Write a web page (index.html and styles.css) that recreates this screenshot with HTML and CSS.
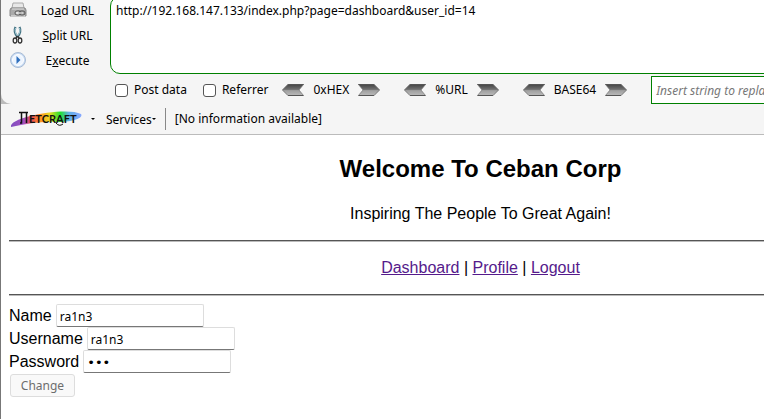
FILE: index.html
```html
<!DOCTYPE html>
<html lang="en">
<head>
<meta charset="utf-8">
<title>Ceban Corp</title>
<link rel="stylesheet" href="styles.css">
</head>
<body>
<svg class="defs" width="0" height="0" aria-hidden="true">
  <defs>
    <linearGradient id="steel" x1="0" y1="0" x2="0" y2="1">
      <stop offset="0" stop-color="#404040"/><stop offset=".45" stop-color="#707070"/><stop offset=".55" stop-color="#a0a0a0"/><stop offset="1" stop-color="#bcbcbc"/>
    </linearGradient>
    <symbol id="arrow" viewBox="0 0 22 12">
      <path d="M0 6 6 0H22L17 6l5 6H6Z" fill="url(#steel)"/>
      <path d="M6 11.5H21.5M6 .5H21.5" stroke="#555" fill="none"/>
      <path d="M.5 6 6 .5M.5 6 6 11.5M21.5.5 17 6l4.500 5.500" stroke="#777" stroke-width=".7" fill="none"/>
    </symbol>
  </defs>
</svg>
<div class="window">
  <section class="hackbar">
    <div class="actions">
      <button type="button" class="action">
        <svg width="18" height="18" viewBox="0 0 18 18"><path d="M4 2h10l1 5H3Z" fill="#e8e8e8" stroke="#aaa"/><path d="M2 7h14l1 2v6H1V9Z" fill="#aaa" stroke="#888"/><path d="M3 8h12" stroke="#ddd"/><path d="M2 14h14v2H2Z" fill="#c8c8c8"/><rect x="6" y="10" width="6" height="4" rx="2" fill="#ddd" stroke="#555"/><rect x="10" y="10" width="6" height="4" rx="2" fill="none" stroke="#555"/><path d="M8 12h6" stroke="#eee"/></svg>
        <span>Lo<u>a</u>d URL</span>
      </button>
      <button type="button" class="action">
        <svg width="18" height="18" viewBox="0 0 18 18"><path d="M6.500 1C5 4 6 8 8.500 11M10.500 1C12 4 11 8 8.500 11" fill="none" stroke="#407080" stroke-width="2.200"/><path d="M6.500 2C5.500 4 6.500 8 8.500 10M10.500 2C11.500 4 10.500 8 8.500 10" fill="none" stroke="#b8dce6" stroke-width=".9"/><path d="M8.500 10 7 12M8.500 10l1.500 2" stroke="#333" stroke-width="1.500"/><ellipse cx="6" cy="14.500" rx="1.800" ry="2.500" fill="none" stroke="#333" stroke-width="1.300"/><ellipse cx="11" cy="14.500" rx="1.800" ry="2.500" fill="none" stroke="#333" stroke-width="1.300"/></svg>
        <span><u>S</u>plit URL</span>
      </button>
      <button type="button" class="action">
        <svg width="18" height="18" viewBox="0 0 18 18"><circle cx="9" cy="9" r="7.500" fill="#c9dcf4" stroke="#a8bbd4"/><circle cx="9" cy="9" r="5.500" fill="#edf5ff" stroke="#fff"/><path d="M7.500 5 11.500 9l-4 4Z" fill="#2f6fbd"/></svg>
        <span>E<u>x</u>ecute</span>
      </button>
    </div>
    <div class="editor">
      <textarea class="url" aria-label="URL" spellcheck="false">http://192.168.147.133/index.php?page=dashboard&amp;user_id=14</textarea>
      <div class="options">
        <label class="check"><input type="checkbox">Post data</label>
        <label class="check"><input type="checkbox">Referrer</label>
        <div class="codec"><button type="button" aria-label="Decode hex"><svg width="22" height="12"><use href="#arrow"/></svg></button><span>0xHEX</span><button type="button" aria-label="Encode hex"><svg class="flip" width="22" height="12"><use href="#arrow"/></svg></button></div>
        <div class="codec"><button type="button" aria-label="Decode URL"><svg width="22" height="12"><use href="#arrow"/></svg></button><span>%URL</span><button type="button" aria-label="Encode URL"><svg class="flip" width="22" height="12"><use href="#arrow"/></svg></button></div>
        <div class="codec"><button type="button" aria-label="Decode Base64"><svg width="22" height="12"><use href="#arrow"/></svg></button><span>BASE64</span><button type="button" aria-label="Encode Base64"><svg class="flip" width="22" height="12"><use href="#arrow"/></svg></button></div>
        <input class="replace" type="text" aria-label="String to replace" placeholder="Insert string to replace">
      </div>
    </div>
  </section>
  <section class="netcraft">
    <button type="button" class="brand" aria-label="Netcraft menu">
      <svg width="74" height="20" viewBox="0 0 74 20">
        <defs><linearGradient id="rainbow"><stop offset="0" stop-color="#8050c0"/><stop offset=".18" stop-color="#a050c0"/><stop offset=".3" stop-color="#f05050"/><stop offset=".43" stop-color="#ff9a20"/><stop offset=".55" stop-color="#e8dc20"/><stop offset=".7" stop-color="#20e030"/><stop offset=".82" stop-color="#60b0e8"/><stop offset="1" stop-color="#88a8ff"/></linearGradient>
        <filter id="soft"><feGaussianBlur stdDeviation=".7"/></filter></defs>
        <path d="M1 18C0 14 8 10 20 7 36 3 62 0 71 5c3 4-9 8-22 8-17-1-33 2-48 5Z" fill="url(#rainbow)" filter="url(#soft)"/>
        <path d="M9 3.500H18M11.500 3V14H10M16.500 3V14" stroke="#111" stroke-width="1.500" fill="none"/>
        <text x="19" y="14" class="wordmark">ETCRAFT</text>
        <path d="M46 14q3 4 7 1" stroke="#111" fill="none"/>
      </svg>
      <span class="caret"></span>
    </button>
    <button type="button" class="services">Services<span class="caret"></span></button>
    <span class="info">[No information available]</span>
  </section>
  <main>
    <header>
      <h2>Welcome To Ceban Corp</h2>
      <p>Inspiring The People To Great Again!</p>
    </header>
    <hr>
    <nav><a href="#dashboard">Dashboard</a> | <a href="#profile">Profile</a> | <a href="#logout">Logout</a></nav>
    <hr>
    <form>
      <div class="field"><label for="name">Name</label><input id="name" type="text" value="ra1n3"></div>
      <div class="field"><label for="username">Username</label><input id="username" type="text" value="ra1n3"></div>
      <div class="field"><label for="password">Password</label><input id="password" type="password" value="abc"></div>
      <button class="change" type="submit" disabled>Change</button>
    </form>
  </main>
</div>
</body>
</html>
```
FILE: styles.css
```css
* { box-sizing: border-box; }
body {
  margin: 0;
  background: #fff;
  color: #000;
  font: 16px/18px "Liberation Sans", Arial, sans-serif;
  overflow: hidden;
}
button, input, textarea { margin: 0; font-family: "Noto Sans", "Open Sans", sans-serif; font-size: 12px; color: #000; }
button { padding: 0; border: 0; background: none; }
svg { display: block; flex: none; }
.defs { position: absolute; }
.window {
  display: flow-root;
  min-width: 960px;
  min-height: 100vh;
  border-left: 1px solid #777;
  background: linear-gradient(#bbb, #bbb) 0 94px / 12px 10px no-repeat;
}

.hackbar, .netcraft { background: #f5f5f5; font: 12px/18px "Noto Sans", "Open Sans", sans-serif; }
.hackbar {
  display: grid;
  grid-template-columns: 109px 1fr;
  margin-top: -4px;
  border-bottom-left-radius: 10px;
}
.actions { display: flex; flex-direction: column; gap: 7px; padding: 5px 8px 0; }
.action { display: flex; align-items: center; height: 18px; gap: 8px; }
.action span { flex: 1; text-align: center; padding-right: 2px; }
.editor { display: flex; flex-direction: column; gap: 2px; }
.url {
  display: block;
  width: 100%;
  height: 78px;
  padding: 5px;
  border: 1px solid #008000;
  border-radius: 10px;
  background: #fff;
  line-height: 18px;
  resize: none;
  outline: none;
}
.options { display: flex; align-items: center; gap: 24px; padding-left: 5px; height: 28px; }
.check { display: flex; align-items: center; gap: 6px; margin-right: -10px; }
.check + .check { margin-left: 2px; }
.check input {
  appearance: none;
  width: 13px;
  height: 13px;
  border: 1px solid #555;
  border-radius: 3px;
  background: #fff;
}
.codec { display: flex; align-items: center; gap: 9px; }
.flip { transform: scaleX(-1); }
.replace { flex: 1; height: 28px; padding: 0 4px; border: 1px solid #008000; background: #fff; }
.replace::placeholder { color: #777; font-style: italic; }

.netcraft { display: flex; align-items: center; height: 31px; padding-left: 9px; border-bottom: 1px solid #bbb; }
.brand, .services { display: flex; align-items: center; }
.brand { gap: 7px; margin-right: 11px; }
.services { margin-right: 9px; }
.wordmark { font: bold 11px Lato, sans-serif; fill: #111; }
.caret { border: 2px solid transparent; border-top-color: #000; border-bottom: 0; }
.info { height: 22px; padding-left: 9px; border-left: 1px solid #888; line-height: 22px; }

main { padding: 20px 8px 8px; }
header, nav { text-align: center; }
h2 { margin: 0 0 22px; font-size: 24px; line-height: 28px; }
p { margin: 0; }
hr { height: 2px; margin: 17px 0; border: 0; border-top: 1px solid #555; border-bottom: 1px solid #bbb; }
a { color: #551a8b; }
form { margin-top: -9px; }
.field { display: flex; align-items: center; gap: 4px; height: 23px; }
.field input {
  width: 148px;
  height: 23px;
  padding: 1px 3px 0;
  border: 1px solid #ddd;
  border-bottom-color: #777;
  border-radius: 2px;
  background: #fff;
}
.field input[type="password"] { font: 13px "DejaVu Sans", sans-serif; }
.change {
  width: 65px;
  height: 23px;
  margin: 1px;
  border: 1px solid #ddd;
  border-radius: 3px;
  background: #f9f9f9;
  color: #6d6d6d;
}
```
